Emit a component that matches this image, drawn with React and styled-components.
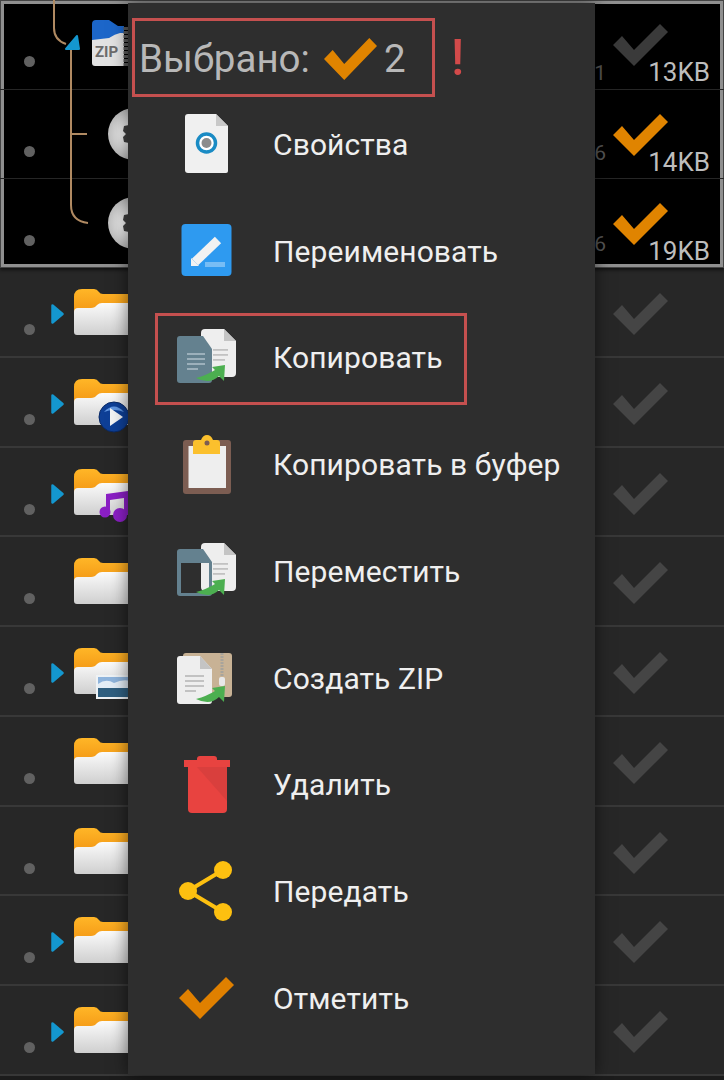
import React from "react";
import styled, { createGlobalStyle } from "styled-components";

const GlobalStyle = createGlobalStyle`
  html, body {
    margin: 0;
    padding: 0;
    background: #1c1c1c;
    font-family: Roboto, "Liberation Sans", sans-serif;
  }
`;

const Screen = styled.div`
  position: relative;
  width: 724px;
  height: 1080px;
  overflow: hidden;
`;

const SelectedPanel = styled.div`
  position: relative;
  background: #000;
  box-shadow: inset 0 0 0 1px #444, inset 0 0 0 4px #8f8f8f, 0 2px 3px #111;
  height: 268px;
`;

const Row = styled.div`
  display: flex;
  align-items: flex-start;
  box-sizing: border-box;
  height: ${(p) => (p.$selected ? "89.5px" : "89.75px")};
  padding: 0 14px 0 24px;
  border-bottom: ${(p) => (p.$last ? "none" : p.$selected ? "1px solid #262626" : "2px solid #383838")};
  background: ${(p) => (p.$selected ? "transparent" : "#272727")};
`;

const Dot = styled.span`
  flex: none;
  width: 11px;
  height: 11px;
  margin-top: 56px;
  border-radius: 50%;
  background: #616161;
`;

const ArrowSlot = styled.div`
  flex: none;
  width: 13px;
  height: 20px;
  margin: 36px 10px 0 16px;
`;

const Thumb = styled.div`
  flex: none;
  width: 60px;
  margin-top: ${(p) => p.$top}px;
  padding-left: ${(p) => p.$left || 0}px;
  box-sizing: border-box;
  svg {
    display: block;
    overflow: visible;
  }
`;

const Meta = styled.div`
  display: flex;
  align-items: flex-start;
  gap: 7px;
  margin-left: auto;
`;

const SideNumber = styled.span`
  margin-top: ${(p) => p.$top}px;
  font-size: 21px;
  line-height: 21px;
  color: #565656;
`;

const CheckCell = styled.div`
  display: flex;
  flex-direction: column;
  align-items: flex-start;
  width: 97px;
  padding-top: ${(p) => (p.$selected ? 24 : 25)}px;
`;

const Size = styled.span`
  align-self: flex-end;
  margin-top: -7px;
  font-size: 26px;
  line-height: 26px;
  color: #bdbdbd;
`;

const TreeLines = styled.svg`
  position: absolute;
  left: 0;
  top: 0;
`;

const Menu = styled.div`
  position: absolute;
  left: 128px;
  top: 3px;
  width: 467px;
  height: 1072px;
  background: #2e2e2e;
  box-shadow: 0 0 16px rgba(0, 0, 0, 0.55);
`;

const MenuHeader = styled.div`
  display: flex;
  align-items: flex-start;
  height: 89px;
  padding: 15px 0 0 4px;
  box-sizing: border-box;
`;

const HeaderBox = styled.div`
  display: flex;
  align-items: center;
  flex: none;
  box-sizing: border-box;
  width: 303px;
  height: 79px;
  padding: 2px 0 0 4px;
  border: 3px solid #c5504f;
  color: #b8b8b8;
  font-size: 38.5px;
  white-space: nowrap;
`;

const HeaderCheck = styled.span`
  display: flex;
  margin: 0 7px 0 14px;
`;

const Alarm = styled.span`
  margin: 15px 0 0 16px;
  font-size: 50px;
  line-height: 50px;
  font-weight: 500;
  color: #d34a4a;
`;

const Item = styled.div`
  position: relative;
  display: flex;
  align-items: center;
  height: 106.75px;
  padding-left: 46px;
  box-sizing: border-box;
  color: #efefef;
  font-size: 30px;
  letter-spacing: 0.1px;

  ${(p) =>
    p.$outlined &&
    `
    &::after {
      content: "";
      position: absolute;
      left: 27px;
      top: 7px;
      width: 312px;
      height: 92px;
      box-sizing: border-box;
      border: 3px solid #c5504f;
    }
  `}
`;

const ItemIcon = styled.svg`
  flex: none;
  width: 64px;
  height: 64px;
  margin-right: 35px;
`;

const ItemLabel = styled.span`
  margin-bottom: 2px;
`;

const Check = ({ color, width = 55 }) => (
  <svg width={width} height="42" viewBox="0 0 55 42" preserveAspectRatio="none">
    <polygon points="0,21 9,12 21,26 47,0 55,8 21,42" fill={color} />
  </svg>
);

const BlueArrow = () => (
  <svg width="13" height="20" viewBox="0 0 13 20">
    <polygon points="1.5,1.5 11.5,10 1.5,18.5" fill="#1497cf" stroke="#1497cf" strokeWidth="2.5" strokeLinejoin="round" />
  </svg>
);

const Folder = ({ id, badge }) => (
  <svg width="60" height="47" viewBox="0 0 60 47">
    <defs>
      <linearGradient id={`back${id}`} x1="0" y1="0" x2="0" y2="1">
        <stop offset="0" stopColor="#ffb627" />
        <stop offset="1" stopColor="#f08f10" />
      </linearGradient>
      <linearGradient id={`front${id}`} x1="0" y1="0" x2="0" y2="1">
        <stop offset="0" stopColor="#fbfbfb" />
        <stop offset="1" stopColor="#cfcfcf" />
      </linearGradient>
    </defs>
    <path d="M0 28V8Q0 0 8 0H20Q23 0 25 3Q26 5 29 5H60V30H0Z" fill={`url(#back${id})`} />
    <path d="M0 43V23Q0 19 4 19H17Q21 19 23 16Q25 14 28 14H60V46H3Q0 46 0 43Z" fill={`url(#front${id})`} />
    {badge === "play" && (
      <g>
        <circle cx="40" cy="38" r="15" fill="#0e3f96" stroke="#0a2a66" strokeWidth="1" />
        <path d="M30 33Q40 22 50 33Q40 29 30 33Z" fill="#5f95e0" />
        <polygon points="36,29 36,47 49,38" fill="#f4f4f4" />
      </g>
    )}
    {badge === "music" && (
      <g fill="#8a1fc4">
        <circle cx="31" cy="43" r="5.5" />
        <circle cx="46" cy="46" r="7" />
        <polygon points="32,25 54,22 54,46 50,46 50,29 36,31 36,43 32,43" />
      </g>
    )}
    {badge === "image" && (
      <g>
        <rect x="22" y="27" width="38" height="24" fill="#eef2f5" />
        <rect x="24" y="29" width="36" height="11" fill="#8fb4dc" />
        <path d="M24 36Q32 30 40 35Q50 30 60 34V40H24Z" fill="#e3edf6" />
        <rect x="24" y="40" width="36" height="9" fill="#2f5f80" />
      </g>
    )}
  </svg>
);

const ZipFile = () => (
  <svg width="38" height="46" viewBox="0 0 38 46">
    <path d="M1 4Q1 0 5 0H18L27 6H33V24H1Z" fill="#1c66c9" />
    <path d="M1 43V20L18 18Q24 14 29 13H33V46H4Q1 46 1 43Z" fill="#e2e2e2" />
    <text x="4" y="37" fontFamily="Roboto, sans-serif" fontWeight="700" fontSize="15" fill="#6c6c6c">ZIP</text>
    <line x1="35" y1="7" x2="35" y2="46" stroke="#5a5a5a" strokeWidth="5" strokeDasharray="3 1" />
  </svg>
);

const GearButton = ({ id }) => (
  <svg width="52" height="52" viewBox="0 0 52 52">
    <defs>
      <radialGradient id={`gear${id}`}>
        <stop offset="0.45" stopColor="#ededed" />
        <stop offset="0.8" stopColor="#cfcfcf" />
        <stop offset="1" stopColor="#bcbcbc" />
      </radialGradient>
    </defs>
    <circle cx="26" cy="26" r="26" fill={`url(#gear${id})`} />
    <path d="M16 18L21 17L26 22L31 17L36 18L37 23L34 26L37 29L36 34L31 35L26 30L21 35L16 34L15 29L18 26L15 23Z" fill="#3f3f3f" />
  </svg>
);

const Sheet = ({ dy }) => (
  <g transform={`translate(0 ${dy})`}>
    <path d="M27 4Q27 0 31 0H50L62 12V44Q62 48 58 48H31Q27 48 27 44Z" fill="#eeeeee" />
    <path d="M50 0L62 12H50Z" fill="#c4c4c4" />
    <g fill="#c2c2c2">
      <rect x="39" y="20" width="15" height="1.8" />
      <rect x="39" y="25" width="15" height="1.8" />
      <rect x="39" y="30" width="12" height="1.8" />
    </g>
  </g>
);

const GreenArrow = ({ dy = 0 }) => (
  <path
    transform={`translate(0 ${dy})`}
    d="M22 51Q33 48 41 43L38 40L51 38L50 54L45 49Q36 58 22 51Z"
    fill="#4caf50"
  />
);

const icons = {
  properties: (
    <>
      <path d="M11 4Q11 1 14 1H42L54 13V58Q54 60 52 60H14Q11 60 11 57Z" fill="#f0f0f0" />
      <path d="M42 1L54 13H42Z" fill="#c8c8c8" />
      <circle cx="32.5" cy="30" r="9" fill="#fff" stroke="#1a8bc4" strokeWidth="3.5" />
      <circle cx="32.5" cy="30" r="5" fill="#8c8c8c" />
    </>
  ),
  rename: (
    <>
      <rect x="7.5" y="4" width="50" height="52" rx="4" fill="#2e9af0" />
      <rect x="31" y="42" width="20" height="5" fill="#ffffff" opacity="0.35" />
      <line x1="21" y1="42" x2="44" y2="20" stroke="#f2f2f2" strokeWidth="9" />
      <polygon points="17,46 17,38 25,46" fill="#f2f2f2" />
    </>
  ),
  copy: (
    <>
      <Sheet dy={2} />
      <path d="M6 9H29L38 22V53Q38 56 35 56H6Q3 56 3 53V12Q3 9 6 9Z" fill="#64818f" />
      <g fill="#9cb0bb">
        <rect x="13" y="26" width="18" height="2" />
        <rect x="13" y="31" width="18" height="2" />
        <rect x="13" y="36" width="18" height="2" />
        <rect x="13" y="41" width="11" height="2" />
      </g>
      <GreenArrow />
    </>
  ),
  clipboard: (
    <>
      <rect x="9" y="6" width="48" height="54" rx="3" fill="#7c5d52" />
      <rect x="14.5" y="12" width="37.5" height="42" fill="#eeeeee" />
      <path d="M19 20V9Q19 6 22 6H27Q29 1 33 1Q37 1 39 6H43Q46 6 46 9V20Z" fill="#fbc02d" />
      <circle cx="33" cy="9" r="2.5" fill="#7c5d52" />
    </>
  ),
  move: (
    <>
      <rect x="7" y="23" width="28" height="31" fill="#2e2e2e" />
      <Sheet dy={3} />
      <path
        fillRule="evenodd"
        d="M6 9H29L38 22V53Q38 56 35 56H6Q3 56 3 53V12Q3 9 6 9ZM7 23V53H35V23Z"
        fill="#64818f"
      />
      <GreenArrow dy={1} />
    </>
  ),
  zip: (
    <>
      <rect x="9" y="6" width="49" height="44" rx="3" fill="#c8b295" />
      <line x1="48" y1="6" x2="48" y2="30" stroke="#a8a49c" strokeWidth="3" strokeDasharray="2 1" />
      <rect x="45" y="30" width="6" height="9" rx="2" fill="#e8e8e8" />
      <path d="M6 9H26L38 22V54Q38 57 35 57H6Q3 57 3 54V12Q3 9 6 9Z" fill="#eeeeee" />
      <path d="M26 9L38 22H26Z" fill="#c4c4c4" />
      <g fill="#c2c2c2">
        <rect x="11" y="28" width="19" height="2" />
        <rect x="11" y="33" width="19" height="2" />
        <rect x="11" y="38" width="19" height="2" />
        <rect x="11" y="43" width="11" height="2" />
      </g>
      <GreenArrow dy={1} />
    </>
  ),
  trash: (
    <>
      <path d="M14 13H53V55Q53 59 49 59H18Q14 59 14 55Z" fill="#e84340" />
      <path d="M23 13H53V47Z" fill="#d93f3d" />
      <path d="M10 6H23V5Q23 2 26 2H40Q43 2 43 5V6H56V13H10Z" fill="#e84340" />
    </>
  ),
  share: (
    <>
      <path d="M49 9L14 30L49 51" fill="none" stroke="#fdc010" strokeWidth="4" />
      <circle cx="49" cy="9" r="9" fill="#fdc010" />
      <circle cx="14" cy="30" r="9" fill="#fdc010" />
      <circle cx="49" cy="51" r="9" fill="#fdc010" />
    </>
  ),
  mark: <polygon points="5,31 14,22 26,36 52,10 60,18 26,52" fill="#e08000" />,
};

const menuItems = [
  { icon: "properties", label: "Свойства" },
  { icon: "rename", label: "Переименовать" },
  { icon: "copy", label: "Копировать", outlined: true },
  { icon: "clipboard", label: "Копировать в буфер" },
  { icon: "move", label: "Переместить" },
  { icon: "zip", label: "Создать ZIP" },
  { icon: "trash", label: "Удалить" },
  { icon: "share", label: "Передать" },
  { icon: "mark", label: "Отметить" },
];

const folders = [
  { arrow: true },
  { arrow: true, badge: "play" },
  { arrow: true, badge: "music" },
  {},
  { arrow: true, badge: "image" },
  {},
  {},
  { arrow: true },
  { arrow: true },
];

const App = () => {
  return (
    <Screen>
      <GlobalStyle />
      <SelectedPanel>
        <Row $selected>
          <Dot />
          <ArrowSlot />
          <Thumb $top={20} $left={17}>
            <ZipFile />
          </Thumb>
          <Meta>
            <SideNumber $top={63}>1</SideNumber>
            <CheckCell $selected>
              <Check color="#3a3a3a" />
              <Size>13KB</Size>
            </CheckCell>
          </Meta>
        </Row>
        <Row $selected>
          <Dot />
          <ArrowSlot />
          <Thumb $top={18} $left={34}>
            <GearButton id="a" />
          </Thumb>
          <Meta>
            <SideNumber $top={53}>6</SideNumber>
            <CheckCell $selected>
              <Check color="#e08400" />
              <Size>14KB</Size>
            </CheckCell>
          </Meta>
        </Row>
        <Row $selected $last>
          <Dot />
          <ArrowSlot />
          <Thumb $top={18} $left={34}>
            <GearButton id="b" />
          </Thumb>
          <Meta>
            <SideNumber $top={55}>6</SideNumber>
            <CheckCell $selected>
              <Check color="#e08400" />
              <Size>19KB</Size>
            </CheckCell>
          </Meta>
        </Row>
        <TreeLines width="130" height="268" viewBox="0 0 130 268">
          <g fill="none" stroke="#b08a62" strokeWidth="2">
            <path d="M54 0V28Q54 40 66 44" />
            <path d="M71 50V205Q71 221 88 223" />
            <path d="M72 134H87" />
          </g>
          <polygon points="77,36 79,49 66,49" fill="#1497cf" stroke="#1497cf" strokeWidth="2" strokeLinejoin="round" />
        </TreeLines>
      </SelectedPanel>

      {folders.map((folder, i) => (
        <Row key={i}>
          <Dot />
          <ArrowSlot>{folder.arrow && <BlueArrow />}</ArrowSlot>
          <Thumb $top={21}>
            <Folder id={i} badge={folder.badge} />
          </Thumb>
          <Meta>
            <CheckCell>
              <Check color="#454545" />
            </CheckCell>
          </Meta>
        </Row>
      ))}

      <Menu>
        <MenuHeader>
          <HeaderBox>
            Выбрано:
            <HeaderCheck>
              <Check color="#e08400" width={53} />
            </HeaderCheck>
            2
          </HeaderBox>
          <Alarm>!</Alarm>
        </MenuHeader>
        {menuItems.map((item) => (
          <Item key={item.label} $outlined={item.outlined}>
            <ItemIcon viewBox="0 0 64 64">{icons[item.icon]}</ItemIcon>
            <ItemLabel>{item.label}</ItemLabel>
          </Item>
        ))}
      </Menu>
    </Screen>
  );
};

export default App;
